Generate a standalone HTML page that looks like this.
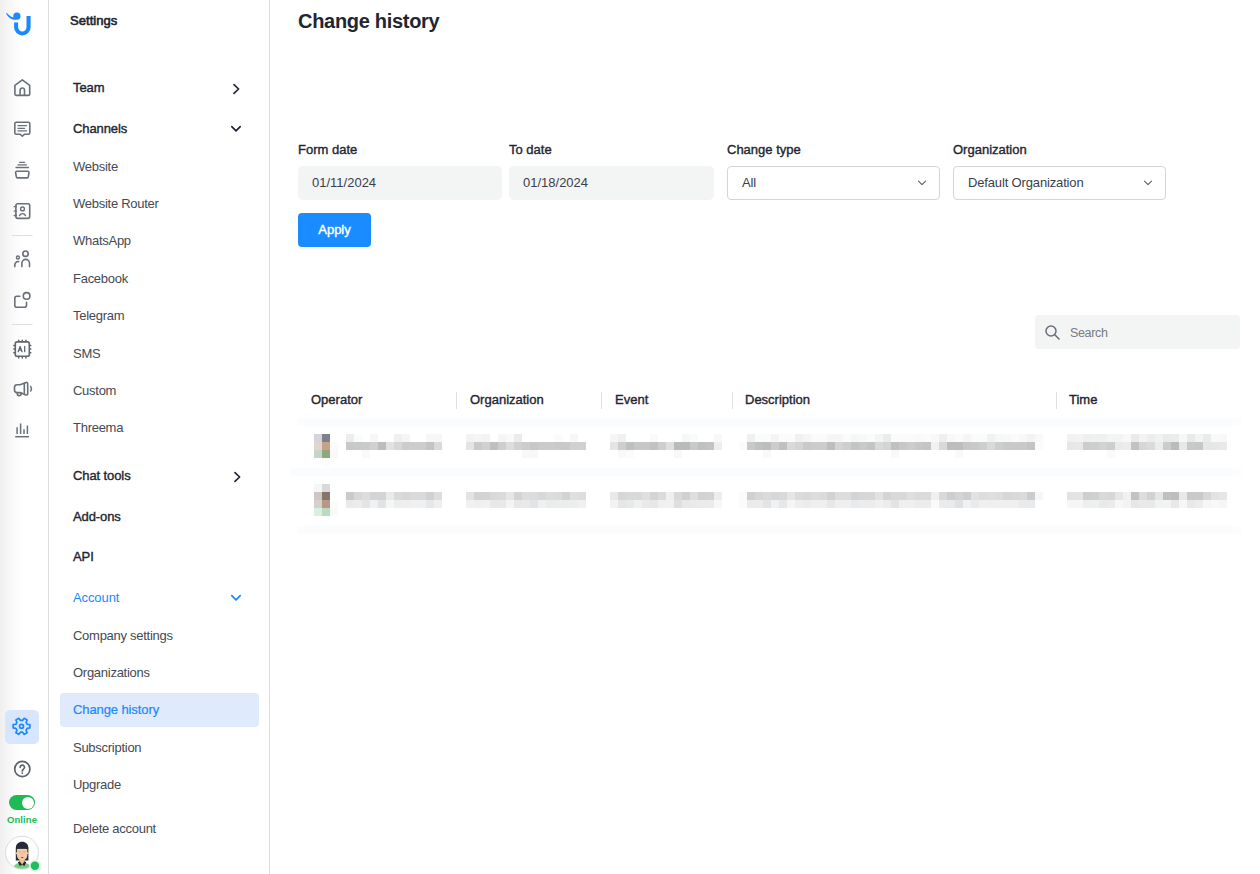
<!DOCTYPE html>
<html>
<head>
<meta charset="utf-8">
<title>Change history</title>
<style>
*{box-sizing:border-box;margin:0;padding:0}
html,body{width:1260px;height:874px;overflow:hidden;background:#fff}
body{font-family:"Liberation Sans",sans-serif;font-size:13px;color:#1f2631;position:relative}
.abs{position:absolute}
#rail{position:absolute;left:0;top:0;width:49px;height:874px;border-right:1px solid #dcdde0;background:linear-gradient(90deg,#efefef 0px,#f5f5f5 7px,#fbfbfb 15px,#ffffff 23px)}
#side{position:absolute;left:49px;top:0;width:221px;height:874px;border-right:1px solid #dcdde0;background:#fff}
.t{position:absolute;white-space:nowrap;line-height:16px;height:16px}
.b{letter-spacing:-0.1px;color:#1f2631;-webkit-text-stroke:0.38px #1f2631}
.s{color:#444a54;letter-spacing:-0.27px}
.blue{color:#1a88ff;letter-spacing:-0.1px}
.ico{position:absolute}

.lb{color:#1f2631;-webkit-text-stroke:0.38px #1f2631}
.inp{height:34px;background:#f3f4f4;border-radius:5px;line-height:33px;padding-left:14px;color:#3a404a}
.sel{letter-spacing:-0.150px;height:34px;background:#fff;border:1px solid #d3d5d8;border-radius:4px;line-height:31px;padding-left:14px;color:#3a404a}
.chev{position:absolute;right:12px;top:13px}
.vs{top:392px;width:1px;height:17px;background:#dddfe2}
</style>
</head>
<body>
<div id="rail"></div>
<div id="side"></div>

<!-- SIDEBAR TEXT -->
<div class="t b m" id="settings" style="left:70px;top:13px;-webkit-text-stroke:0.600px #1f2631;letter-spacing:0.050px">Settings</div>
<div class="t b m" style="left:73px;top:80px">Team</div>
<div class="t b m" style="left:73px;top:121px">Channels</div>
<div class="t s m" style="left:73px;top:159px">Website</div>
<div class="t s m" style="left:73px;top:196px">Website Router</div>
<div class="t s m" style="left:73px;top:233px">WhatsApp</div>
<div class="t s m" style="left:73px;top:271px">Facebook</div>
<div class="t s m" style="left:73px;top:308px">Telegram</div>
<div class="t s m" style="left:73px;top:346px">SMS</div>
<div class="t s m" style="left:73px;top:383px">Custom</div>
<div class="t s m" style="left:73px;top:420px">Threema</div>
<div class="t b m" style="left:73px;top:468px">Chat tools</div>
<div class="t b m" style="left:73px;top:509px">Add-ons</div>
<div class="t b m" style="left:73px;top:549px">API</div>
<div class="t blue m" style="left:73px;top:590px">Account</div>
<div class="t s m" style="left:73px;top:628px">Company settings</div>
<div class="t s m" style="left:73px;top:665px">Organizations</div>
<div class="abs" id="hl" style="left:60px;top:693px;width:199px;height:34px;background:#dfeafc;border-radius:4px"></div>
<div class="t blue m" style="left:73px;top:702px;-webkit-text-stroke:0.2px #1a88ff">Change history</div>
<div class="t s m" style="left:73px;top:740px">Subscription</div>
<div class="t s m" style="left:73px;top:777px">Upgrade</div>
<div class="t s m" style="left:73px;top:821px">Delete account</div>

<!-- SIDEBAR CHEVRONS -->
<svg class="abs" style="left:231px;top:82px" width="12" height="14" viewBox="0 0 12 14"><path d="M3 2.6l4.6 4.4L3 11.4" fill="none" stroke="#1f2631" stroke-width="1.7" stroke-linecap="round" stroke-linejoin="round"/></svg>
<svg class="abs" style="left:229px;top:123px" width="14" height="12" viewBox="0 0 14 12"><path d="M2.8 3.6L7 7.8l4.2-4.2" fill="none" stroke="#1f2631" stroke-width="1.7" stroke-linecap="round" stroke-linejoin="round"/></svg>
<svg class="abs" style="left:231.500px;top:469.500px" width="12" height="14" viewBox="0 0 12 14"><path d="M3 2.6l4.6 4.4L3 11.4" fill="none" stroke="#1f2631" stroke-width="1.7" stroke-linecap="round" stroke-linejoin="round"/></svg>
<svg class="abs" style="left:229px;top:592px" width="14" height="12" viewBox="0 0 14 12"><path d="M2.8 3.6L7 7.8l4.2-4.2" fill="none" stroke="#1a88ff" stroke-width="1.7" stroke-linecap="round" stroke-linejoin="round"/></svg>

<!-- RAIL ICONS -->
<svg class="abs" style="left:0;top:0" width="48" height="460" viewBox="0 0 48 460" fill="none" stroke="#69707a" stroke-width="1.6" stroke-linejoin="round" stroke-linecap="round">
<!-- logo -->
<g stroke="none" fill="#1a88ff">
<path d="M14.1 22.5h4v4.700a4.2 4.2 0 0 0 8.4 0V15.900h4.100v11.300a8.250 8.250 0 0 1-16.500 0z"/>
<circle cx="16.9" cy="16.2" r="3.6"/>
<path d="M6.300 12.900c.3 0 .6.100.9.400 1.900 2.200 4 3.700 6.500 4.300l2.600 2.200c-4.600.5-8.200-2.200-10.200-6.500-.100-.2 0-.4.200-.4z"/>
</g>
<!-- home -->
<path d="M14.9 85.300L22.300 79.800l7.400 5.500v8.700a1.400 1.400 0 0 1-1.400 1.400H16.300a1.400 1.400 0 0 1-1.400-1.400z"/>
<path d="M20.100 95.200v-5a2.200 2.200 0 0 1 4.400 0v5"/>
<!-- chat -->
<path d="M16.300 122.300h12a1.500 1.500 0 0 1 1.500 1.500v8.900a1.500 1.500 0 0 1-1.500 1.500h-3.900L22.300 136.300 20.200 134.200h-3.900a1.500 1.500 0 0 1-1.500-1.500v-8.900a1.500 1.500 0 0 1 1.500-1.500z"/>
<path d="M18 125.700h8.600M18 128.300h6.600M18 130.900h8.600" stroke-width="1.200"/>
<!-- stack -->
<path d="M19.600 162.300h5M18 164.900h8.400M16 167.500h12.400" stroke-width="1.300"/>
<path d="M16.800 171.300h11a1.200 1.200 0 0 1 1.200 1.400l-.7 4a1.400 1.400 0 0 1-1.400 1.200h-9.200a1.400 1.400 0 0 1-1.400-1.200l-.7-4a1.200 1.200 0 0 1 1.200-1.400z"/>
<!-- contacts -->
<rect x="15.900" y="203.800" width="13.800" height="14.600" rx="1.800"/>
<path d="M14.200 206.700h2.200M14.200 211.100h2.200M14.200 215.500h2.200" stroke-width="1.300"/>
<circle cx="22.500" cy="208.900" r="1.900" stroke-width="1.400"/>
<path d="M19.500 215.600a3.300 3.300 0 0 1 6 0" stroke-width="1.400"/>
<path d="M12 235.500h20.500" stroke="#dcdee1" stroke-width="1" stroke-linecap="butt"/>
<!-- people -->
<circle cx="25.500" cy="253.700" r="2.700"/>
<path d="M21.900 266.600v-3.400a3.800 3.800 0 0 1 7.600 0v3.400"/>
<circle cx="17.900" cy="257.500" r="1.500" stroke-width="1.400"/>
<path d="M14.800 266.600v-1.800a3.300 3.300 0 0 1 3.900-3.200"/>
<!-- square+circle -->
<circle cx="26.600" cy="295.900" r="3.300"/>
<path d="M19.800 296.200h-3a2 2 0 0 0-2 2v7a2 2 0 0 0 2 2h7.700a2 2 0 0 0 2-2v-3"/>
<path d="M12 324.500h20.500" stroke="#dcdee1" stroke-width="1" stroke-linecap="butt"/>
<!-- AI chip -->
<g stroke="#5f6670">
<rect x="15.300" y="341.900" width="14" height="14.400" rx="1.800"/>
<path d="M18.700 340.300v1.200M22.300 340.300v1.200M25.900 340.300v1.200M18.700 356.700v1.200M22.300 356.700v1.200M25.900 356.700v1.200M13.800 345.500h1.100M13.800 349.100h1.100M13.800 352.700h1.100M29.700 345.500h1.100M29.700 349.100h1.100M29.700 352.700h1.100" stroke-width="1.500"/>
<path d="M18.200 351.700l1.900-5.200 1.900 5.200M18.900 350.100h2.400M24.700 346.500v5.200" stroke-width="1.300"/>
</g>
<!-- megaphone -->
<path d="M20.100 384.800l6-2.300a1.200 1.200 0 0 1 1.600 1.100v10.200a1.200 1.200 0 0 1-1.600 1.100l-6-2.300h-3a2.600 2.600 0 0 1-2.600-2.600v-2.600a2.600 2.600 0 0 1 2.600-2.600z"/>
<path d="M24.300 383.200v11.200" />
<path d="M17.300 392.800v1a1.900 1.900 0 0 0 3.800 0v-.8"/>
<path d="M30.600 386.300a4 4 0 0 1 0 4.800" stroke-width="1.400"/>
<!-- chart -->
<path d="M17.100 427.300v6.800M20.600 423.500v10.600M24 429.200v4.900M27.400 425.500v8.600" stroke-width="1.500" stroke-linecap="butt"/>
<path d="M15.200 436.700h13.800" stroke-width="1.500" stroke-linecap="butt"/>
</svg>
<!-- settings active -->
<div class="abs" style="left:5px;top:710px;width:34px;height:34px;border-radius:5px;background:#d8e6fd"></div>
<svg class="abs" style="left:0;top:700px" width="48" height="90" viewBox="0 700 48 90" fill="none" stroke-linejoin="round" stroke-linecap="round">
<path d="M27.14 724.25 L29.84 724.68 L29.84 727.92 L27.14 728.35 L26.10 730.16 L27.08 732.72 L24.27 734.34 L22.54 732.21 L20.46 732.21 L18.73 734.34 L15.92 732.72 L16.90 730.16 L15.86 728.35 L13.16 727.92 L13.16 724.68 L15.86 724.25 L16.90 722.44 L15.92 719.88 L18.73 718.26 L20.46 720.39 L22.54 720.39 L24.27 718.26 L27.08 719.88 L26.10 722.44z" stroke="#1a88ff" stroke-width="1.700"/>
<circle cx="21.500" cy="726.300" r="2" stroke="#1a88ff" stroke-width="1.700"/>
<!-- help -->
<circle cx="22.300" cy="769" r="7.600" stroke="#5d636d" stroke-width="1.700"/>
<path d="M20.100 767.300a2.200 2.200 0 1 1 3.300 1.900c-.8.500-1.100.9-1.100 1.700" stroke="#5d636d" stroke-width="1.700"/>
<circle cx="22.300" cy="773.100" r=".95" fill="#5d636d"/>
</svg>
<!-- toggle -->
<div class="abs" style="left:9px;top:795px;width:26px;height:15px;border-radius:8px;background:#1fb955"></div>
<div class="abs" style="left:21.500px;top:796.500px;width:12px;height:12px;border-radius:6px;background:#fff"></div>
<div class="abs" style="left:0;top:814px;width:44px;height:12px;line-height:12px;text-align:center;font-size:9.500px;font-weight:bold;color:#1fb955;letter-spacing:0.100px">Online</div>
<!-- avatar -->
<svg class="abs" style="left:4px;top:835px" width="40" height="39" viewBox="0 0 40 39">
<defs><clipPath id="av"><circle cx="18" cy="17.700" r="16"/></clipPath></defs>
<circle cx="18" cy="17.700" r="16.500" fill="#fff" stroke="#d9dbdf" stroke-width="1"/>
<g clip-path="url(#av)">
<path d="M11.800 25.600V13.200c0-4.200 2.800-6.400 6.300-6.400s6.300 2.200 6.300 6.400v12.400z" fill="#272b37"/>
<path d="M9 34.500c0-4.600 3.600-6.800 9.100-6.800s9.100 2.200 9.100 6.800z" fill="#7ad081"/>
<path d="M15.500 22h5.200v6.400l-2.600 1.800-2.600-1.800z" fill="#eebd98"/>
<path d="M13.900 27.300l1.800-1 2.400 3.400-2.300 1.300zM22.300 27.300l-1.800-1-2.400 3.400 2.300 1.300z" fill="#22252e"/>
<path d="M12.900 13.500h10.400v6.800c0 3-2.400 5.100-5.200 5.100s-5.200-2.100-5.200-5.100z" fill="#f3caa3"/>
<circle cx="12.500" cy="18.200" r="1" fill="#f3caa3"/><circle cx="23.700" cy="18.200" r="1" fill="#f3caa3"/>
<path d="M12 14.200c0-4.400 2.700-6.600 6.100-6.600s6.100 2.200 6.100 6.600c-3.600-.6-8.600-.6-12.200 0z" fill="#272b37"/>
<ellipse cx="18.200" cy="22.600" rx="1.300" ry=".55" fill="#8a4545"/>
<path d="M14.900 16.800h2.200M19.300 16.800h2.200" stroke="#b99478" stroke-width=".5"/>
<path d="M18.500 17.200l-.6 2.600h.8" stroke="#c9a283" stroke-width=".4" fill="none"/>
</g>
<circle cx="30.900" cy="30.800" r="5.900" fill="#d8f3e2"/>
<circle cx="30.900" cy="30.800" r="4.200" fill="#1fbd5c"/>
</svg>

<!-- MAIN -->
<div class="t m" id="h1" style="left:298px;top:8px;font-size:20px;line-height:26px;height:26px;font-weight:bold;letter-spacing:-0.3px;color:#1f2631">Change history</div>

<!-- FILTERS -->
<div class="t lb m" style="left:298px;top:142px">Form date</div>
<div class="t lb m" style="left:509px;top:142px">To date</div>
<div class="t lb m" style="left:727px;top:142px">Change type</div>
<div class="t lb m" style="left:953px;top:142px">Organization</div>
<div class="abs inp" style="left:298px;top:166px;width:204px"><span class="m">01/11/2024</span></div>
<div class="abs inp" style="left:509px;top:166px;width:205px"><span class="m">01/18/2024</span></div>
<div class="abs sel" style="left:727px;top:166px;width:213px"><span class="m">All</span>
<svg class="chev" width="10" height="6" viewBox="0 0 10 6"><path d="M1.500 1.200l3.500 3.500 3.500-3.500" fill="none" stroke="#5f6670" stroke-width="1.200" stroke-linecap="round" stroke-linejoin="round"/></svg></div>
<div class="abs sel" style="left:953px;top:166px;width:213px"><span class="m">Default Organization</span>
<svg class="chev" width="10" height="6" viewBox="0 0 10 6"><path d="M1.500 1.200l3.500 3.500 3.500-3.500" fill="none" stroke="#5f6670" stroke-width="1.200" stroke-linecap="round" stroke-linejoin="round"/></svg></div>
<div class="abs" id="apply" style="left:298px;top:213px;width:73px;height:34px;background:#1a8cff;border-radius:4px;color:#fff;-webkit-text-stroke:0.4px #fff;text-align:center;line-height:33px"><span class="m">Apply</span></div>

<!-- SEARCH -->
<div class="abs" id="search" style="left:1035px;top:315px;width:205px;height:34px;background:#f3f4f4;border-radius:4px"></div>
<svg class="abs" style="left:1044px;top:324px" width="17" height="17" viewBox="0 0 17 17"><circle cx="7" cy="7" r="5" fill="none" stroke="#68707a" stroke-width="1.500"/><path d="M10.800 10.800L15 15" stroke="#68707a" stroke-width="1.600" stroke-linecap="round"/></svg>
<div class="t m" style="left:1070px;top:325px;color:#767b84;font-size:12.500px;letter-spacing:-0.350px">Search</div>

<!-- TABLE HEAD -->
<div class="t lb m" style="left:311px;top:392px">Operator</div>
<div class="t lb m" style="left:470px;top:392px">Organization</div>
<div class="t lb m" style="left:615px;top:392px">Event</div>
<div class="t lb m" style="left:745px;top:392px">Description</div>
<div class="t lb m" style="left:1069px;top:392px">Time</div>
<div class="abs vs" style="left:456px"></div>
<div class="abs vs" style="left:601px"></div>
<div class="abs vs" style="left:732px"></div>
<div class="abs vs" style="left:1056px"></div>

<!-- ROWS -->
<svg class="abs" style="left:0;top:0" width="1260" height="540" viewBox="0 0 1260 540" shape-rendering="crispEdges">
<path fill="#fbfcfd" d="M297 418h937v8h-937zM290 468h944v8h-944zM297 526h937v8h-937z"/>
<path fill="#fcfdfe" d="M1234 418h8v8h-8zM1234 468h8v8h-8zM1234 526h8v8h-8z"/>
<path fill="#d4d5da" d="M314 434h8v8h-8z"/>
<path fill="#7d808d" d="M322 434h8v8h-8z"/>
<path fill="#e1d5cd" d="M314 442h8v8h-8z"/>
<path fill="#c7a286" d="M322 442h8v8h-8z"/>
<path fill="#fbfbf9" d="M330 442h8v8h-8z"/>
<path fill="#c3d5c8" d="M314 450h8v8h-8z"/>
<path fill="#8da77f" d="M322 450h8v8h-8z"/>
<path fill="#f8faf7" d="M330 450h8v8h-8z"/>
<path fill="#fbfdfb" d="M322 458h8v8h-8z"/>
<path fill="#c8c9cb" d="M346 442h8v8h-8zM354 442h8v8h-8zM747 442h8v8h-8zM803 442h8v8h-8zM1187 442h8v8h-8zM1187 492h8v8h-8zM1195 492h8v8h-8z"/>
<path fill="#c9cacb" d="M362 442h8v8h-8zM474 442h8v8h-8zM538 442h8v8h-8z"/>
<path fill="#cfd0d1" d="M370 442h8v8h-8zM482 442h8v8h-8zM570 442h8v8h-8zM578 442h8v8h-8z"/>
<path fill="#bcbdbf" d="M378 442h8v8h-8zM763 442h8v8h-8zM827 442h8v8h-8zM947 442h8v8h-8zM955 442h8v8h-8zM1171 492h8v8h-8z"/>
<path fill="#e1e2e3" d="M386 442h8v8h-8zM971 492h8v8h-8z"/>
<path fill="#d6d7d8" d="M394 442h8v8h-8zM354 492h8v8h-8zM755 492h8v8h-8zM771 492h8v8h-8zM859 492h8v8h-8zM867 492h8v8h-8zM1003 492h8v8h-8z"/>
<path fill="#cbcccd" d="M402 442h8v8h-8zM522 442h8v8h-8zM771 442h8v8h-8zM811 442h8v8h-8zM819 442h8v8h-8zM907 442h8v8h-8z"/>
<path fill="#cccdce" d="M410 442h8v8h-8zM418 442h8v8h-8z"/>
<path fill="#c3c4c6" d="M426 442h8v8h-8zM851 442h8v8h-8zM867 442h8v8h-8zM923 442h8v8h-8zM1027 442h8v8h-8z"/>
<path fill="#d9dadb" d="M434 442h8v8h-8z"/>
<path fill="#eceeed" d="M346 434h8v8h-8z"/>
<path fill="#fbfbfb" d="M354 434h8v8h-8zM554 434h8v8h-8zM626 450h8v8h-8zM1035 442h8v8h-8zM739 442h8v8h-8zM755 434h8v8h-8zM763 434h8v8h-8zM779 434h8v8h-8zM787 434h8v8h-8zM811 434h8v8h-8zM819 434h8v8h-8zM843 434h8v8h-8zM867 434h8v8h-8zM891 434h8v8h-8zM899 434h8v8h-8zM907 434h8v8h-8zM923 434h8v8h-8zM955 434h8v8h-8zM971 434h8v8h-8zM979 434h8v8h-8zM1011 434h8v8h-8zM739 492h8v8h-8zM739 500h8v8h-8z"/>
<path fill="#f6f6f6" d="M370 434h8v8h-8zM827 434h8v8h-8zM835 434h8v8h-8zM851 434h8v8h-8zM1035 492h8v8h-8zM1067 500h8v8h-8zM1075 500h8v8h-8zM1179 500h8v8h-8zM1203 500h8v8h-8zM1219 500h8v8h-8z"/>
<path fill="#f0f0f0" d="M394 434h8v8h-8zM795 434h8v8h-8zM1099 434h8v8h-8zM410 500h8v8h-8zM418 500h8v8h-8zM658 500h8v8h-8zM931 492h8v8h-8zM875 500h8v8h-8zM979 500h8v8h-8z"/>
<path fill="#f5f5f5" d="M402 434h8v8h-8zM474 434h8v8h-8zM498 434h8v8h-8zM610 434h8v8h-8zM803 434h8v8h-8zM963 434h8v8h-8zM386 500h8v8h-8zM787 500h8v8h-8z"/>
<path fill="#f7f7f7" d="M426 434h8v8h-8zM434 434h8v8h-8zM570 434h8v8h-8zM995 434h8v8h-8zM1179 434h8v8h-8zM714 500h8v8h-8zM1115 500h8v8h-8z"/>
<path fill="#fafafa" d="M362 450h8v8h-8zM650 434h8v8h-8zM690 434h8v8h-8zM1107 450h8v8h-8zM931 500h8v8h-8z"/>
<path fill="#e3e4e5" d="M466 442h8v8h-8z"/>
<path fill="#bebfc1" d="M490 442h8v8h-8zM626 442h8v8h-8z"/>
<path fill="#cdced0" d="M498 442h8v8h-8zM1091 442h8v8h-8zM1107 442h8v8h-8zM947 492h8v8h-8zM963 492h8v8h-8zM1083 492h8v8h-8z"/>
<path fill="#dcddde" d="M506 442h8v8h-8zM434 492h8v8h-8zM546 492h8v8h-8zM578 492h8v8h-8zM811 492h8v8h-8zM835 492h8v8h-8zM843 492h8v8h-8zM979 492h8v8h-8zM995 492h8v8h-8z"/>
<path fill="#d0d1d2" d="M514 442h8v8h-8z"/>
<path fill="#c6c7c8" d="M530 442h8v8h-8zM634 442h8v8h-8zM642 442h8v8h-8zM899 442h8v8h-8zM915 442h8v8h-8zM963 442h8v8h-8z"/>
<path fill="#cacbcc" d="M546 442h8v8h-8z"/>
<path fill="#c8c9ca" d="M554 442h8v8h-8zM562 442h8v8h-8zM690 442h8v8h-8zM859 442h8v8h-8zM971 442h8v8h-8zM1003 442h8v8h-8zM1011 442h8v8h-8zM1019 442h8v8h-8z"/>
<path fill="#f3f3f3" d="M466 434h8v8h-8zM482 434h8v8h-8zM1027 434h8v8h-8zM1075 434h8v8h-8zM1139 434h8v8h-8zM1195 434h8v8h-8zM506 500h8v8h-8zM610 500h8v8h-8zM1123 500h8v8h-8zM1163 500h8v8h-8z"/>
<path fill="#f9f9f9" d="M506 434h8v8h-8zM618 450h8v8h-8zM915 434h8v8h-8zM1035 434h8v8h-8zM763 450h8v8h-8zM891 450h8v8h-8zM955 450h8v8h-8zM1211 434h8v8h-8z"/>
<path fill="#ebebeb" d="M514 434h8v8h-8zM883 434h8v8h-8zM1107 500h8v8h-8z"/>
<path fill="#f8f8f8" d="M522 450h8v8h-8zM530 450h8v8h-8zM714 434h8v8h-8zM674 450h8v8h-8zM931 434h8v8h-8zM947 434h8v8h-8zM1003 434h8v8h-8zM1019 434h8v8h-8zM1123 434h8v8h-8zM1211 500h8v8h-8z"/>
<path fill="#e4e4e5" d="M610 442h8v8h-8zM362 500h8v8h-8z"/>
<path fill="#cdcecf" d="M618 442h8v8h-8zM658 442h8v8h-8zM843 442h8v8h-8zM979 442h8v8h-8zM995 442h8v8h-8z"/>
<path fill="#c1c2c4" d="M650 442h8v8h-8zM1131 442h8v8h-8zM1131 492h8v8h-8z"/>
<path fill="#dfdfe0" d="M666 442h8v8h-8zM674 500h8v8h-8z"/>
<path fill="#b9babc" d="M674 442h8v8h-8zM682 442h8v8h-8z"/>
<path fill="#bfc0c2" d="M698 442h8v8h-8zM755 442h8v8h-8zM779 442h8v8h-8zM891 442h8v8h-8zM1163 492h8v8h-8z"/>
<path fill="#c2c3c5" d="M706 442h8v8h-8z"/>
<path fill="#eeeeef" d="M714 442h8v8h-8z"/>
<path fill="#eff0f0" d="M618 434h8v8h-8zM747 434h8v8h-8zM1091 434h8v8h-8zM538 500h8v8h-8zM578 500h8v8h-8zM634 500h8v8h-8z"/>
<path fill="#f6f7f7" d="M682 434h8v8h-8z"/>
<path fill="#d8d9da" d="M787 442h8v8h-8zM875 442h8v8h-8zM939 442h8v8h-8zM987 442h8v8h-8zM490 492h8v8h-8zM626 492h8v8h-8zM634 492h8v8h-8zM674 492h8v8h-8zM779 492h8v8h-8zM803 492h8v8h-8zM891 492h8v8h-8zM899 492h8v8h-8zM939 492h8v8h-8zM1011 492h8v8h-8z"/>
<path fill="#d3d4d5" d="M795 442h8v8h-8zM835 442h8v8h-8zM883 442h8v8h-8z"/>
<path fill="#f0f1f1" d="M931 442h8v8h-8zM987 434h8v8h-8zM1123 492h8v8h-8z"/>
<path fill="#f4f4f4" d="M771 434h8v8h-8zM1115 434h8v8h-8z"/>
<path fill="#f7f8f8" d="M859 434h8v8h-8zM1219 434h8v8h-8z"/>
<path fill="#f3f4f4" d="M875 434h8v8h-8zM1107 434h8v8h-8z"/>
<path fill="#efefef" d="M939 434h8v8h-8zM434 500h8v8h-8zM474 500h8v8h-8zM666 492h8v8h-8zM811 500h8v8h-8zM819 500h8v8h-8zM835 500h8v8h-8zM843 500h8v8h-8zM899 500h8v8h-8zM907 500h8v8h-8zM987 500h8v8h-8zM995 500h8v8h-8zM1003 500h8v8h-8zM1011 500h8v8h-8z"/>
<path fill="#f1f1f1" d="M1067 434h8v8h-8zM1155 434h8v8h-8zM370 500h8v8h-8zM466 500h8v8h-8zM482 500h8v8h-8zM666 500h8v8h-8zM771 500h8v8h-8zM963 500h8v8h-8z"/>
<path fill="#eeefef" d="M1083 434h8v8h-8zM1091 500h8v8h-8z"/>
<path fill="#eaeaea" d="M1131 434h8v8h-8z"/>
<path fill="#ecedec" d="M1147 434h8v8h-8z"/>
<path fill="#e9eaea" d="M1163 434h8v8h-8zM1203 434h8v8h-8zM1115 442h8v8h-8zM386 492h8v8h-8zM690 500h8v8h-8z"/>
<path fill="#ebecec" d="M1171 434h8v8h-8zM1123 442h8v8h-8zM1155 442h8v8h-8zM554 500h8v8h-8zM562 500h8v8h-8z"/>
<path fill="#e8e9e9" d="M1187 434h8v8h-8zM610 492h8v8h-8zM626 500h8v8h-8zM1179 492h8v8h-8z"/>
<path fill="#e6e7e7" d="M1067 442h8v8h-8zM1211 442h8v8h-8z"/>
<path fill="#e8e8e8" d="M1075 442h8v8h-8zM1179 442h8v8h-8zM682 500h8v8h-8zM1171 500h8v8h-8zM1187 500h8v8h-8z"/>
<path fill="#cbccce" d="M1083 442h8v8h-8zM1163 442h8v8h-8zM1027 492h8v8h-8z"/>
<path fill="#d1d2d4" d="M1099 442h8v8h-8zM698 492h8v8h-8zM827 492h8v8h-8zM1147 492h8v8h-8z"/>
<path fill="#d6d7d9" d="M1139 442h8v8h-8zM402 492h8v8h-8zM618 492h8v8h-8zM1107 492h8v8h-8zM1203 492h8v8h-8z"/>
<path fill="#dadbdc" d="M1147 442h8v8h-8zM554 492h8v8h-8zM658 492h8v8h-8zM763 492h8v8h-8zM795 492h8v8h-8zM819 492h8v8h-8zM915 492h8v8h-8zM923 492h8v8h-8zM1019 492h8v8h-8z"/>
<path fill="#babbbd" d="M1171 442h8v8h-8z"/>
<path fill="#c6c7c9" d="M1195 442h8v8h-8z"/>
<path fill="#e6e6e6" d="M1203 442h8v8h-8zM1115 492h8v8h-8zM1219 492h8v8h-8z"/>
<path fill="#e9e9e9" d="M1219 442h8v8h-8zM1099 500h8v8h-8zM1147 500h8v8h-8z"/>
<path fill="#f5f7f6" d="M314 484h8v8h-8z"/>
<path fill="#d9d9dc" d="M322 484h8v8h-8z"/>
<path fill="#cdc6c3" d="M314 492h8v8h-8z"/>
<path fill="#85756c" d="M322 492h8v8h-8z"/>
<path fill="#d3d0ce" d="M314 500h8v8h-8z"/>
<path fill="#b69984" d="M322 500h8v8h-8z"/>
<path fill="#fcfcfa" d="M330 500h8v8h-8z"/>
<path fill="#dbeee0" d="M314 508h8v8h-8z"/>
<path fill="#b9dbc1" d="M322 508h8v8h-8z"/>
<path fill="#f8fbf8" d="M330 508h8v8h-8z"/>
<path fill="#c9cacc" d="M346 492h8v8h-8z"/>
<path fill="#dcdddf" d="M362 492h8v8h-8zM522 492h8v8h-8zM1139 492h8v8h-8z"/>
<path fill="#d3d4d6" d="M370 492h8v8h-8zM378 492h8v8h-8zM650 492h8v8h-8zM706 492h8v8h-8zM851 492h8v8h-8zM883 492h8v8h-8zM955 492h8v8h-8z"/>
<path fill="#d9dadc" d="M394 492h8v8h-8zM410 492h8v8h-8zM418 492h8v8h-8z"/>
<path fill="#d0d1d3" d="M426 492h8v8h-8z"/>
<path fill="#eaeaeb" d="M346 500h8v8h-8z"/>
<path fill="#ececed" d="M354 500h8v8h-8zM803 500h8v8h-8zM859 500h8v8h-8zM867 500h8v8h-8zM883 500h8v8h-8zM915 500h8v8h-8zM923 500h8v8h-8z"/>
<path fill="#e2e3e5" d="M378 500h8v8h-8zM466 492h8v8h-8z"/>
<path fill="#eceded" d="M394 500h8v8h-8zM714 492h8v8h-8z"/>
<path fill="#eeeeee" d="M402 500h8v8h-8zM795 500h8v8h-8zM1083 500h8v8h-8z"/>
<path fill="#e6e7e8" d="M426 500h8v8h-8zM779 500h8v8h-8zM827 500h8v8h-8zM1131 500h8v8h-8z"/>
<path fill="#d2d3d5" d="M474 492h8v8h-8zM482 492h8v8h-8zM514 492h8v8h-8zM562 492h8v8h-8z"/>
<path fill="#dadbdb" d="M498 492h8v8h-8z"/>
<path fill="#e6e6e7" d="M506 492h8v8h-8zM618 500h8v8h-8zM787 492h8v8h-8z"/>
<path fill="#dbdcdd" d="M530 492h8v8h-8z"/>
<path fill="#d7d8da" d="M538 492h8v8h-8z"/>
<path fill="#dedfe0" d="M570 492h8v8h-8zM642 492h8v8h-8zM907 492h8v8h-8zM987 492h8v8h-8z"/>
<path fill="#e8e8e9" d="M490 500h8v8h-8zM498 500h8v8h-8zM514 500h8v8h-8z"/>
<path fill="#e9e9ea" d="M522 500h8v8h-8zM642 500h8v8h-8zM1139 500h8v8h-8z"/>
<path fill="#e2e3e4" d="M530 500h8v8h-8zM763 500h8v8h-8zM891 500h8v8h-8z"/>
<path fill="#eaebeb" d="M546 500h8v8h-8z"/>
<path fill="#ededee" d="M570 500h8v8h-8z"/>
<path fill="#cfd0d2" d="M682 492h8v8h-8zM747 492h8v8h-8zM1091 492h8v8h-8z"/>
<path fill="#dededf" d="M690 492h8v8h-8z"/>
<path fill="#e7e7e8" d="M650 500h8v8h-8z"/>
<path fill="#ebebec" d="M698 500h8v8h-8zM706 500h8v8h-8zM747 500h8v8h-8zM755 500h8v8h-8zM939 500h8v8h-8z"/>
<path fill="#e2e2e3" d="M875 492h8v8h-8z"/>
<path fill="#e9eaeb" d="M851 500h8v8h-8zM947 500h8v8h-8zM971 500h8v8h-8zM1019 500h8v8h-8zM1027 500h8v8h-8z"/>
<path fill="#e0e1e2" d="M955 500h8v8h-8z"/>
<path fill="#e2e3e3" d="M1067 492h8v8h-8zM1211 492h8v8h-8z"/>
<path fill="#e4e4e4" d="M1075 492h8v8h-8z"/>
<path fill="#d8d9db" d="M1099 492h8v8h-8z"/>
<path fill="#e4e5e6" d="M1155 492h8v8h-8z"/>
<path fill="#f1f2f2" d="M1155 500h8v8h-8z"/>
<path fill="#ececec" d="M1195 500h8v8h-8z"/>
</svg>
<!-- /ROWS -->
</body>
</html>
